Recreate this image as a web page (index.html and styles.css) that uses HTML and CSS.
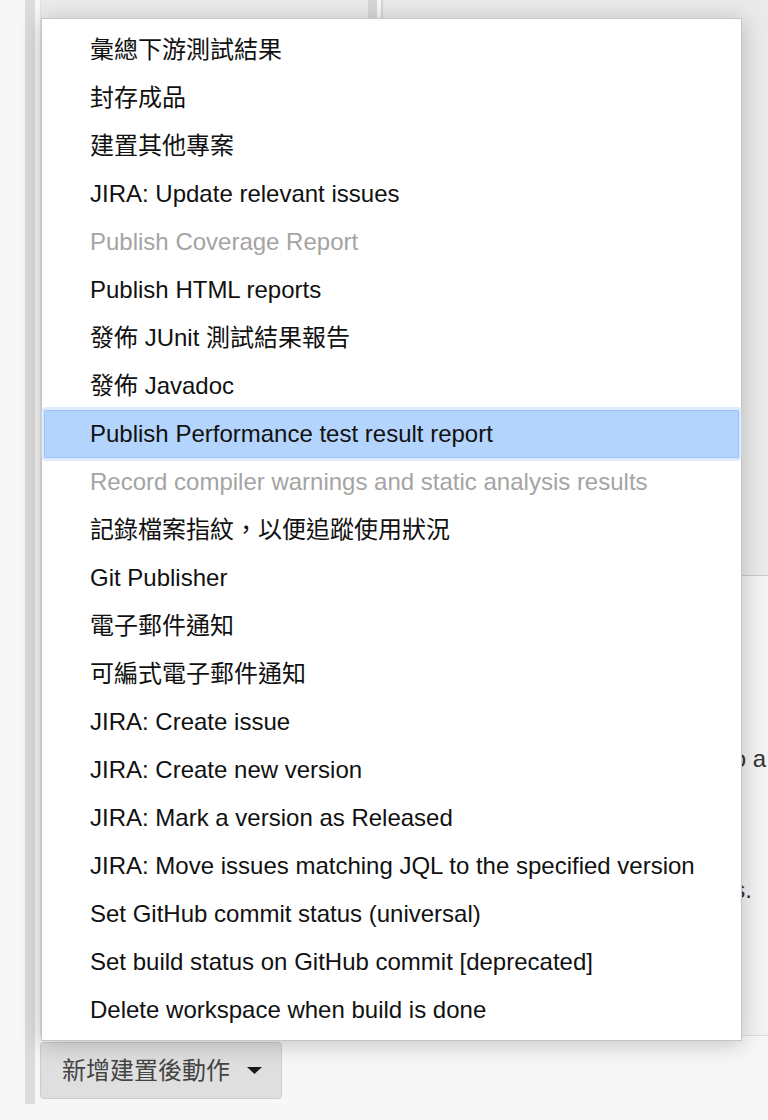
FILE: index.html
```html
<!DOCTYPE html>
<html lang="zh-Hant">
<head>
<meta charset="utf-8">
<title>Post-build actions</title>
<link rel="stylesheet" href="styles.css">
</head>
<body>
<div class="page">
  <div class="section">
    <div class="columns">
      <div class="col-left"></div>
      <div class="splitter"></div>
      <div class="col-right">
        <div class="panel-upper"></div>
        <div class="panel-lower">
          <div class="help-line help-line--first">Report files relative to a</div>
          <div class="help-line help-line--second">Separate multiple files.</div>
        </div>
      </div>
    </div>
    <div class="add-wrap">
      <button class="add-btn" type="button">
        <span class="add-label">新增建置後動作</span>
        <svg class="caret" width="15" height="7" viewBox="0 0 15 7" aria-hidden="true"><polygon points="0,0 15,0 7.5,7" fill="#1a1a1a"/></svg>
      </button>
    </div>
  </div>

  <ul class="menu">
    <li class="menu-item">彙總下游測試結果</li>
    <li class="menu-item">封存成品</li>
    <li class="menu-item">建置其他專案</li>
    <li class="menu-item">JIRA: Update relevant issues</li>
    <li class="menu-item is-disabled">Publish Coverage Report</li>
    <li class="menu-item">Publish HTML reports</li>
    <li class="menu-item">發佈 JUnit 測試結果報告</li>
    <li class="menu-item">發佈 Javadoc</li>
    <li class="menu-item is-active">Publish Performance test result report</li>
    <li class="menu-item is-disabled">Record compiler warnings and static analysis results</li>
    <li class="menu-item">記錄檔案指紋，以便追蹤使用狀況</li>
    <li class="menu-item">Git Publisher</li>
    <li class="menu-item">電子郵件通知</li>
    <li class="menu-item">可編式電子郵件通知</li>
    <li class="menu-item">JIRA: Create issue</li>
    <li class="menu-item">JIRA: Create new version</li>
    <li class="menu-item">JIRA: Mark a version as Released</li>
    <li class="menu-item">JIRA: Move issues matching JQL to the specified version</li>
    <li class="menu-item">Set GitHub commit status (universal)</li>
    <li class="menu-item">Set build status on GitHub commit [deprecated]</li>
    <li class="menu-item">Delete workspace when build is done</li>
  </ul>
</div>
</body>
</html>
```

FILE: styles.css
```css
* {
  box-sizing: border-box;
}

html,
body {
  margin: 0;
  padding: 0;
}

body {
  width: 768px;
  height: 1120px;
  overflow: hidden;
  background: #f7f7f7;
  font-family: "Liberation Sans", Arial, "Noto Sans CJK TC", sans-serif;
}

.page {
  position: relative;
  height: 1120px;
  padding-left: 25px;
}

.section {
  border-left: 10px solid #dcdcdc;
  padding: 0 0 5px 5px;
}

.columns {
  display: flex;
  height: 1036px;
}

.col-left {
  width: 328px;
  background: #ebebeb;
  border-left: 1px solid #e2e2e2;
}

.splitter {
  width: 9px;
  margin-right: 4px;
  background: #d7d7d7;
}

.col-right {
  flex: 1;
  min-width: 0;
  display: flex;
  flex-direction: column;
  border-left: 2px solid #d3d3d3;
}

.panel-upper {
  height: 576px;
  background: #eaeaea;
  border-bottom: 1px solid #cbcbcb;
}

.panel-lower {
  flex: 1;
  background: #f3f3f3;
  border-bottom: 1px solid #dcdcdc;
  padding-top: 167px;
}

.help-line {
  font-size: 24px;
  line-height: 32px;
  color: #333;
  white-space: nowrap;
  text-align: right;
}

.help-line--first {
  padding-right: 2px;
}

.help-line--second {
  margin-top: 99px;
  padding-right: 16px;
}

.add-wrap {
  margin-top: 6px;
}

.add-btn {
  display: flex;
  align-items: center;
  gap: 17px;
  width: 242px;
  height: 57px;
  margin: 0;
  padding: 0 20px 0 21px;
  background: #dfdfdf;
  border: 1px solid #cdcdcd;
  border-radius: 4px;
  color: #444;
  font-family: "Liberation Sans", Arial, "Noto Sans CJK TC", sans-serif;
  font-size: 24px;
  line-height: 1;
}

.add-label {
  white-space: nowrap;
}

.caret {
  display: block;
  flex: none;
}

.menu {
  position: absolute;
  top: 18px;
  left: 41px;
  width: 701px;
  margin: 0;
  padding: 7px 0 6px;
  list-style: none;
  background: #fff;
  border: 1px solid #c6c6c6;
  box-shadow: 0 3px 22px rgba(0, 0, 0, 0.22);
  font-family: "Liberation Sans", Arial, "Noto Sans CJK TC", sans-serif;
  font-size: 24px;
  color: #111;
}

.menu-item {
  height: 48px;
  line-height: 48px;
  margin: 0 2px;
  padding-left: 46px;
  white-space: nowrap;
}

.menu-item.is-disabled {
  color: #a4a4a4;
}

.menu-item.is-active {
  position: relative;
  background: #b3d4fc;
  border-radius: 2px;
  box-shadow: inset 0 0 0 1px #97c0f4, 0 0 0 3px rgba(200, 222, 252, 0.6);
}
```
